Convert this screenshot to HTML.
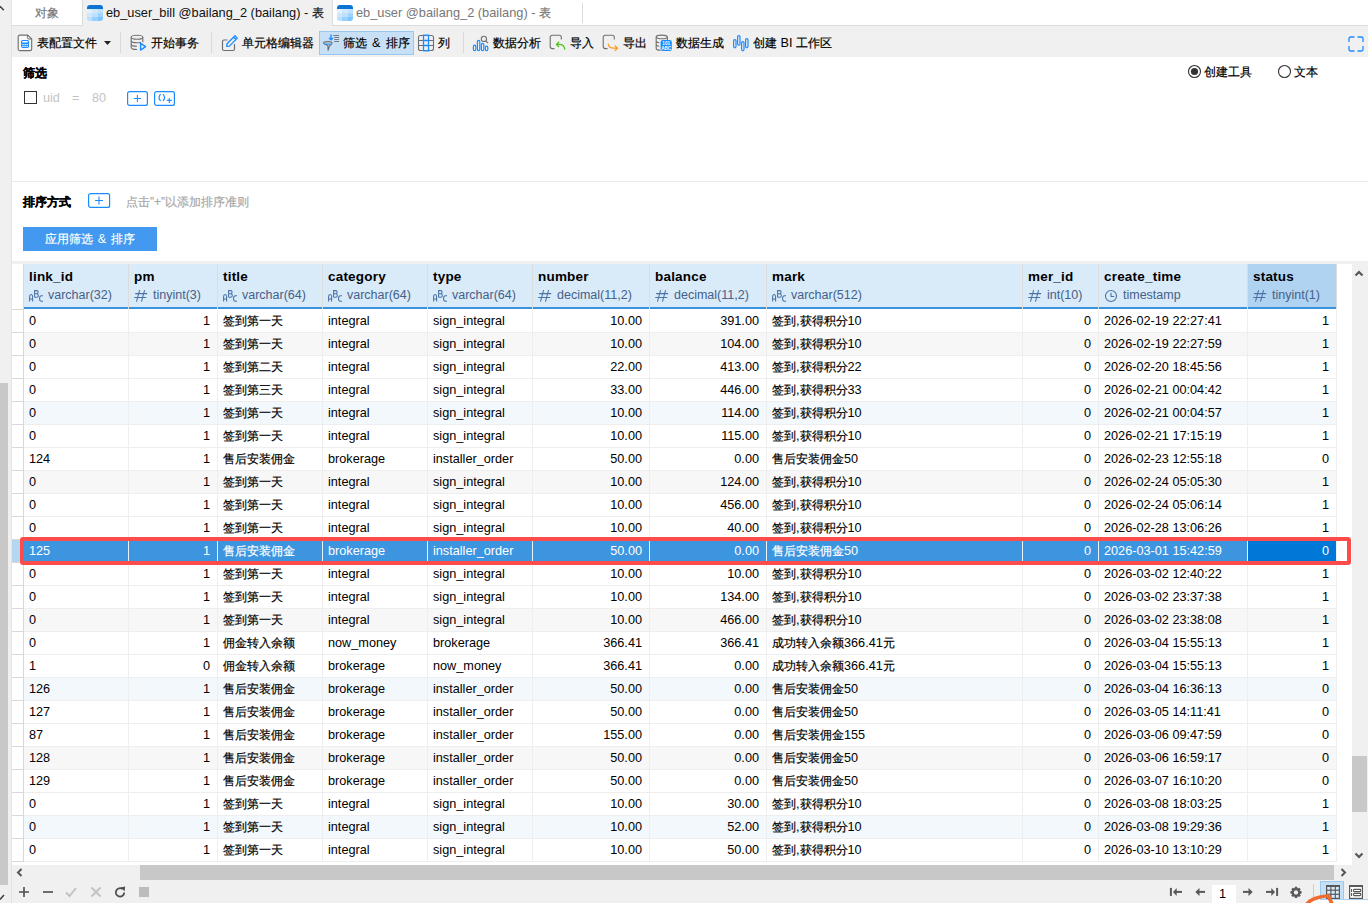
<!DOCTYPE html>
<html><head><meta charset="utf-8"><style>
*{box-sizing:border-box;margin:0;padding:0}
html,body{width:1368px;height:903px;overflow:hidden;background:#fff;font-family:"Liberation Sans",sans-serif;color:#000}
.a{position:absolute}
i{font-style:normal;font-size:12px;-webkit-text-stroke:0.2px}
.tb{font-size:12.7px;white-space:nowrap}
.ico{position:absolute}
.c{position:absolute;top:0;height:23px;line-height:22px;font-size:12.7px;padding:0 7px 0 5px;white-space:nowrap;overflow:hidden;border-right:1px solid #eeeeee;border-bottom:1px solid #eeeeee}
.r{text-align:right}
.row{position:absolute;left:12px;width:1324px;height:23px}
.rh{position:absolute;left:0;top:0;width:12px;height:23px;border-right:1px solid #d9d9d9;border-bottom:1px solid #d9d9d9;background:#fff}
.hd{position:absolute;top:264px;height:45px;background:#d9eaf8;border-right:1px solid #dcdcdc}
.bl{position:absolute;left:0;right:0;bottom:0;height:2px;background:#3b93de}
.hn{position:absolute;left:5px;top:5px;font-weight:bold;font-size:13.5px;line-height:16px;letter-spacing:0.2px}
.ht{position:absolute;left:5px;top:23px;font-size:12.5px;color:#44618a;line-height:16px;white-space:nowrap}
.ht span{margin-left:19px}
</style></head><body>

<div class="a" style="left:0;top:0;width:12px;height:903px;background:#f0f0f0;border-right:1px solid #e3e3e3"></div>
<div class="a" style="left:0;top:383px;width:8px;height:502px;background:#c8c8c8"></div>
<div class="a" style="left:12px;top:0;width:1356px;height:26px;background:#fff;border-bottom:1px solid #dcdcdc"></div>
<div class="a tb" style="left:35px;top:5px;color:#777"><i>对象</i></div>
<div class="a" style="left:82px;top:0;width:251px;height:27px;background:#f0f0f0;border-left:1px solid #dcdcdc;border-right:1px solid #dcdcdc"></div>
<svg class="ico" style="left:87px;top:5px" width="16" height="16" viewBox="0 0 16 16"><defs><clipPath id="tc1"><rect x="0" y="0" width="16" height="16" rx="3"/></clipPath></defs><g clip-path="url(#tc1)"><rect x="0" y="0" width="16" height="4.2" fill="#0a74d4"/><rect x="0" y="4.2" width="5" height="3.9" fill="#e3f1fd"/><rect x="5" y="4.2" width="6" height="3.9" fill="#d0e8fc"/><rect x="11" y="4.2" width="5" height="3.9" fill="#bfe0fc"/><rect x="0" y="8.1" width="5" height="3.9" fill="#cfe7fc"/><rect x="5" y="8.1" width="6" height="3.9" fill="#bde0fc"/><rect x="11" y="8.1" width="5" height="3.9" fill="#9fd2fe"/><rect x="0" y="12" width="5" height="4" fill="#bde0fc"/><rect x="5" y="12" width="6" height="4" fill="#9ad0fe"/><rect x="11" y="12" width="5" height="4" fill="#80c4ff"/></g></svg>
<div class="a tb" style="left:106px;top:5px;font-size:12.8px;color:#111">eb_user_bill @bailang_2 (bailang) - <i>表</i></div>
<svg class="ico" style="left:337px;top:5px" width="16" height="16" viewBox="0 0 16 16"><defs><clipPath id="tc2"><rect x="0" y="0" width="16" height="16" rx="3"/></clipPath></defs><g clip-path="url(#tc2)"><rect x="0" y="0" width="16" height="4.2" fill="#0a74d4"/><rect x="0" y="4.2" width="5" height="3.9" fill="#e3f1fd"/><rect x="5" y="4.2" width="6" height="3.9" fill="#d0e8fc"/><rect x="11" y="4.2" width="5" height="3.9" fill="#bfe0fc"/><rect x="0" y="8.1" width="5" height="3.9" fill="#cfe7fc"/><rect x="5" y="8.1" width="6" height="3.9" fill="#bde0fc"/><rect x="11" y="8.1" width="5" height="3.9" fill="#9fd2fe"/><rect x="0" y="12" width="5" height="4" fill="#bde0fc"/><rect x="5" y="12" width="6" height="4" fill="#9ad0fe"/><rect x="11" y="12" width="5" height="4" fill="#80c4ff"/></g></svg>
<div class="a tb" style="left:356px;top:5px;font-size:12.8px;color:#777">eb_user @bailang_2 (bailang) - <i>表</i></div>
<div class="a" style="left:582px;top:3px;width:1px;height:20px;background:#dcdcdc"></div>
<div class="a" style="left:12px;top:26px;width:1356px;height:31px;background:#f0f0f0"></div>
<svg class="ico" style="left:17px;top:34px" width="17" height="18" viewBox="0 0 17 18"><path d="M2.9 1.1h7.8l4 4v9.8a1.7 1.7 0 0 1-1.7 1.7H2.9a1.7 1.7 0 0 1-1.7-1.7V2.8a1.7 1.7 0 0 1 1.7-1.7z" fill="#f8f8f8" stroke="#6f6f6f" stroke-width="1.1"/><path d="M10.4 1.1v2.4a1.5 1.5 0 0 0 1.5 1.5h2.8" fill="none" stroke="#6f6f6f" stroke-width="1"/><rect x="4.1" y="5.9" width="7.9" height="8" rx="1.6" fill="#1a8cff"/><rect x="5.3" y="7.1" width="5.5" height="1.5" rx="0.5" fill="#fff"/><g fill="#fff"><rect x="5.3" y="10" width="1.3" height="1.1"/><rect x="7.4" y="10" width="1.3" height="1.1"/><rect x="9.5" y="10" width="1.3" height="1.1"/><rect x="5.3" y="11.9" width="1.3" height="1.1"/><rect x="7.4" y="11.9" width="1.3" height="1.1"/><rect x="9.5" y="11.9" width="1.3" height="1.1"/></g></svg>
<div class="a tb" style="left:37px;top:35px"><i>表配置文件</i></div>
<svg class="ico" style="left:104px;top:41px" width="7" height="4"><path d="M0 0h7L3.5 4z" fill="#222"/></svg>
<div class="a" style="left:120px;top:32px;width:1px;height:21px;background:#dadada"></div>
<svg class="ico" style="left:130px;top:34px" width="18" height="18" viewBox="0 0 18 18"><g fill="none" stroke="#6f6f6f" stroke-width="1.1"><ellipse cx="7" cy="3.3" rx="5.8" ry="2"/><path d="M1.2 3.3v10.2c0 1.1 2.6 2 5.8 2"/><path d="M12.8 3.3v5"/><path d="M1.2 6.8c0 1.1 2.6 2 5.8 2c1.6 0 3-.2 4-.6"/><path d="M1.2 10.2c0 1.1 2.6 2 5.8 2"/></g><path d="M10.6 9.3v6.8l5-3.4z" fill="none" stroke="#1a8cff" stroke-width="1.4" stroke-linejoin="round"/></svg>
<div class="a tb" style="left:151px;top:35px"><i>开始事务</i></div>
<div class="a" style="left:211px;top:32px;width:1px;height:21px;background:#dadada"></div>
<svg class="ico" style="left:221px;top:34px" width="18" height="18" viewBox="0 0 18 18"><path d="M6.5 6H3a1.5 1.5 0 0 0-1.5 1.5v7.5A1.5 1.5 0 0 0 3 16.5h9a1.5 1.5 0 0 0 1.5-1.5v-5" fill="none" stroke="#6f6f6f" stroke-width="1.2"/><path d="M5.7 12.4l.3-2.6 8-8 2.3 2.3-8 8z M12.6 3.2l2.3 2.3" fill="none" stroke="#1a8cff" stroke-width="1.3" stroke-linejoin="round"/></svg>
<div class="a tb" style="left:242px;top:35px"><i>单元格编辑器</i></div>
<div class="a" style="left:319px;top:31px;width:95px;height:24px;background:#c7e0f5;border:1px solid #98c8f0"></div>
<svg class="ico" style="left:322px;top:33px" width="19" height="19" viewBox="0 0 19 19"><path d="M1.5 10.2c0-1 2-1.6 4.3-1.6s4.3.6 4.3 1.6c0 .6-1.3 1.3-2.6 2.6l-1.4 4.5-.2-4.5C4.4 11.5 1.5 11 1.5 10.2z" fill="none" stroke="#6f6f6f" stroke-width="1.1" stroke-linejoin="round"/><path d="M2.5 11.1h6" stroke="#1a8cff" stroke-width="1.1"/><path d="M9 1.5v5.3M7 4.9l2 2 2-2" fill="none" stroke="#1a8cff" stroke-width="1.3"/><path d="M11.3 2.5h5.8M12.2 4.5h4.9M12.2 6.5h4.9M12.2 8.5h4.9" stroke="#6f6f6f" stroke-width="0.9"/></svg>
<div class="a tb" style="left:343px;top:35px;word-spacing:1.5px"><i>筛选</i> &amp; <i>排序</i></div>
<svg class="ico" style="left:417px;top:34px" width="18" height="18" viewBox="0 0 18 18"><rect x="1.5" y="1.5" width="15" height="15" rx="2" fill="none" stroke="#6f6f6f" stroke-width="1.1"/><path d="M1.5 6.5h15M1.5 11.5h15" stroke="#6f6f6f" stroke-width="1.1"/><rect x="6.5" y="1.2" width="5" height="15.6" fill="none" stroke="#1a8cff" stroke-width="1.3"/><path d="M6.5 6.5h5M6.5 11.5h5" stroke="#1a8cff" stroke-width="1.3"/></svg>
<div class="a tb" style="left:438px;top:35px"><i>列</i></div>
<div class="a" style="left:463px;top:32px;width:1px;height:21px;background:#dadada"></div>
<svg class="ico" style="left:471px;top:34px" width="19" height="18" viewBox="0 0 19 18"><g fill="none" stroke="#1a8cff" stroke-width="1.2"><rect x="2.4" y="11.2" width="2.4" height="5.4" rx="1.2"/><rect x="6.4" y="6.3" width="2.4" height="10.3" rx="1.2"/><rect x="10.4" y="9.3" width="2.4" height="7.3" rx="1.2"/><rect x="14.4" y="12.2" width="2.4" height="4.4" rx="1.2"/></g><circle cx="12.9" cy="4.9" r="2.6" fill="none" stroke="#6f6f6f" stroke-width="1.1"/><path d="M14.8 6.8l2.3 2.3" stroke="#6f6f6f" stroke-width="1.2"/></svg>
<div class="a tb" style="left:493px;top:35px"><i>数据分析</i></div>
<svg class="ico" style="left:549px;top:34px" width="18" height="18" viewBox="0 0 18 18"><path d="M5.5 14.6H3.2A2 2 0 0 1 1.2 12.6V3.3A2 2 0 0 1 3.2 1.3h7.1A2 2 0 0 1 12.3 3.3v2.2" fill="none" stroke="#6f6f6f" stroke-width="1.1"/><path d="M15.8 15.6c-.3-3.2-2.4-5.2-5.5-5.2H7.6M10.1 7.8L7.4 10.4l2.7 2.6" fill="none" stroke="#4cc21c" stroke-width="1.2"/></svg>
<div class="a tb" style="left:570px;top:35px"><i>导入</i></div>
<svg class="ico" style="left:602px;top:34px" width="18" height="18" viewBox="0 0 18 18"><path d="M5.5 14.6H3.2A2 2 0 0 1 1.2 12.6V3.3A2 2 0 0 1 3.2 1.3h7.1A2 2 0 0 1 12.3 3.3v2.2" fill="none" stroke="#6f6f6f" stroke-width="1.1"/><path d="M6.2 9.6c.4 2.8 2.2 4.6 5 4.6h4.2M12.8 11.5l2.8 2.7-2.8 2.6" fill="none" stroke="#ff9a1a" stroke-width="1.2"/></svg>
<div class="a tb" style="left:623px;top:35px"><i>导出</i></div>
<svg class="ico" style="left:655px;top:34px" width="18" height="18" viewBox="0 0 18 18"><g fill="none" stroke="#6f6f6f" stroke-width="1.1"><ellipse cx="6.8" cy="2.9" rx="5.6" ry="1.8"/><path d="M1.2 2.9v11.5c0 1 2 1.7 4.5 1.8"/><path d="M12.4 2.9v3.3"/><path d="M1.2 6.9c0 .8 1.2 1.4 3 1.7M1.2 10.6c0 .8 1.2 1.4 3 1.7"/></g><rect x="5.6" y="6" width="11.2" height="11" rx="2.2" fill="#1a8cff"/><text x="11.2" y="10.9" font-size="4.6" font-family="Liberation Sans" font-weight="bold" text-anchor="middle" fill="#fff">101</text><text x="11.2" y="15.8" font-size="4.6" font-family="Liberation Sans" font-weight="bold" text-anchor="middle" fill="#fff">ABC</text></svg>
<div class="a tb" style="left:676px;top:35px"><i>数据生成</i></div>
<svg class="ico" style="left:732px;top:34px" width="18" height="18" viewBox="0 0 18 18"><g fill="none" stroke="#1a8cff" stroke-width="1.2"><rect x="1.6" y="5.6" width="2.4" height="8.2" rx="1.2"/><rect x="5.6" y="1.6" width="2.4" height="9.6" rx="1.2"/><rect x="9.6" y="7.6" width="2.4" height="9.2" rx="1.2"/><rect x="13.6" y="4.6" width="2.4" height="9.2" rx="1.2"/></g></svg>
<div class="a tb" style="left:753px;top:35px"><i>创建</i> BI <i>工作区</i></div>
<svg class="ico" style="left:1348px;top:36px" width="16" height="16" viewBox="0 0 16 16"><path d="M1 5.5V2.5A1.5 1.5 0 0 1 2.5 1h3.5M10 1h3.5A1.5 1.5 0 0 1 15 2.5v3M15 10.5v3a1.5 1.5 0 0 1-1.5 1.5H10M6 15H2.5A1.5 1.5 0 0 1 1 13.5v-3" fill="none" stroke="#1a8cff" stroke-width="1.3" stroke-linecap="round"/></svg>
<div class="a" style="left:23px;top:63px;font-weight:bold"><i style="font-size:12px">筛选</i></div>
<div class="a" style="left:24px;top:91px;width:13px;height:13px;border:1.4px solid #333;background:#fff"></div>
<div class="a" style="left:43px;top:91px;font-size:12.7px;color:#c4c4c4;white-space:nowrap">uid</div>
<div class="a" style="left:72px;top:91px;font-size:12.7px;color:#c4c4c4">=</div>
<div class="a" style="left:92px;top:91px;font-size:12.7px;color:#c4c4c4">80</div>
<svg class="ico" style="left:127px;top:91px" width="21" height="15" viewBox="0 0 21 15"><rect x="0.6" y="0.6" width="19.8" height="13.8" rx="2" fill="#fff" stroke="#1a8cff" stroke-width="1.2"/><path d="M10.4 3.9v7M6.9 7.4h7" stroke="#1a8cff" stroke-width="1.05"/></svg>
<svg class="ico" style="left:154px;top:91px" width="21" height="15" viewBox="0 0 21 15"><rect x="0.6" y="0.6" width="19.8" height="13.8" rx="2" fill="#fff" stroke="#1a8cff" stroke-width="1.2"/><path d="M6.6 3.1Q3.4 6.5 6.6 9.9M9 3.1Q12.2 6.5 9 9.9" fill="none" stroke="#1a8cff" stroke-width="1.2"/><path d="M15.3 6.9v5M12.8 9.4h5" stroke="#1a8cff" stroke-width="1.1"/></svg>
<svg class="ico" style="left:1187px;top:64px" width="15" height="15" viewBox="0 0 15 15"><circle cx="7.5" cy="7.5" r="6" fill="#fff" stroke="#333" stroke-width="1.1"/><circle cx="7.5" cy="7.5" r="3.6" fill="#333"/></svg>
<div class="a tb" style="left:1204px;top:64px"><i>创建工具</i></div>
<svg class="ico" style="left:1277px;top:64px" width="15" height="15" viewBox="0 0 15 15"><circle cx="7.5" cy="7.5" r="6" fill="#fff" stroke="#333" stroke-width="1.1"/></svg>
<div class="a tb" style="left:1294px;top:64px"><i>文本</i></div>
<div class="a" style="left:12px;top:181px;width:1356px;height:1px;background:#e9e9e9"></div>
<div class="a" style="left:23px;top:192px;font-weight:bold"><i style="font-size:12px">排序方式</i></div>
<svg class="ico" style="left:88px;top:193px" width="23" height="15" viewBox="0 0 23 15"><rect x="0.6" y="0.6" width="21" height="13.8" rx="2" fill="#fff" stroke="#1a8cff" stroke-width="1.2"/><path d="M11 3.5v8M7 7.5h8" stroke="#1a8cff" stroke-width="1.1"/></svg>
<div class="a tb" style="left:126px;top:194px;color:#a8a8a8"><i>点击”+”以添加排序准则</i></div>
<div class="a" style="left:23px;top:227px;width:134px;height:24px;background:#4299ef"></div>
<div class="a tb" style="left:45px;top:231px;color:#fff;word-spacing:1.2px"><i>应用筛选</i> &amp; <i>排序</i></div>
<div class="a" style="left:12px;top:261px;width:1356px;height:3px;background:#f0f0f0"></div>
<div class="hd" style="left:24px;width:105px;background:#d9eaf8"><div class="hn">link_id</div><svg class="ico" style="left:5px;top:25px" width="16" height="14" viewBox="0 0 16 14"><path d="M0.6 12.4V7.6a1.5 2.1 0 0 1 3 0v4.8M0.6 10h3" fill="none" stroke="#4a72a6" stroke-width="1.05"/><path d="M5.6 8.2V1.6H7.6a1.5 1.6 0 0 1 0 3.2H5.6M7.7 4.8a1.6 1.7 0 0 1 0 3.4H5.6" fill="none" stroke="#4a72a6" stroke-width="1.05"/><path d="M14 6.8H12.5a1.9 2.7 0 0 0 0 5.5H14" fill="none" stroke="#4a72a6" stroke-width="1.05"/></svg><div class="ht"><span>varchar(32)</span></div><div class="bl"></div></div>
<div class="hd" style="left:129px;width:89px;background:#d9eaf8"><div class="hn">pm</div><svg class="ico" style="left:5px;top:25px" width="16" height="14" viewBox="0 0 16 14"><path d="M5.6 1.2L2.5 12.6M10.6 1.2L7.5 12.6M1.2 4.6h12M0.2 8.4h12" stroke="#4a72a6" stroke-width="1.05" fill="none"/></svg><div class="ht"><span>tinyint(3)</span></div><div class="bl"></div></div>
<div class="hd" style="left:218px;width:105px;background:#d9eaf8"><div class="hn">title</div><svg class="ico" style="left:5px;top:25px" width="16" height="14" viewBox="0 0 16 14"><path d="M0.6 12.4V7.6a1.5 2.1 0 0 1 3 0v4.8M0.6 10h3" fill="none" stroke="#4a72a6" stroke-width="1.05"/><path d="M5.6 8.2V1.6H7.6a1.5 1.6 0 0 1 0 3.2H5.6M7.7 4.8a1.6 1.7 0 0 1 0 3.4H5.6" fill="none" stroke="#4a72a6" stroke-width="1.05"/><path d="M14 6.8H12.5a1.9 2.7 0 0 0 0 5.5H14" fill="none" stroke="#4a72a6" stroke-width="1.05"/></svg><div class="ht"><span>varchar(64)</span></div><div class="bl"></div></div>
<div class="hd" style="left:323px;width:105px;background:#d9eaf8"><div class="hn">category</div><svg class="ico" style="left:5px;top:25px" width="16" height="14" viewBox="0 0 16 14"><path d="M0.6 12.4V7.6a1.5 2.1 0 0 1 3 0v4.8M0.6 10h3" fill="none" stroke="#4a72a6" stroke-width="1.05"/><path d="M5.6 8.2V1.6H7.6a1.5 1.6 0 0 1 0 3.2H5.6M7.7 4.8a1.6 1.7 0 0 1 0 3.4H5.6" fill="none" stroke="#4a72a6" stroke-width="1.05"/><path d="M14 6.8H12.5a1.9 2.7 0 0 0 0 5.5H14" fill="none" stroke="#4a72a6" stroke-width="1.05"/></svg><div class="ht"><span>varchar(64)</span></div><div class="bl"></div></div>
<div class="hd" style="left:428px;width:105px;background:#d9eaf8"><div class="hn">type</div><svg class="ico" style="left:5px;top:25px" width="16" height="14" viewBox="0 0 16 14"><path d="M0.6 12.4V7.6a1.5 2.1 0 0 1 3 0v4.8M0.6 10h3" fill="none" stroke="#4a72a6" stroke-width="1.05"/><path d="M5.6 8.2V1.6H7.6a1.5 1.6 0 0 1 0 3.2H5.6M7.7 4.8a1.6 1.7 0 0 1 0 3.4H5.6" fill="none" stroke="#4a72a6" stroke-width="1.05"/><path d="M14 6.8H12.5a1.9 2.7 0 0 0 0 5.5H14" fill="none" stroke="#4a72a6" stroke-width="1.05"/></svg><div class="ht"><span>varchar(64)</span></div><div class="bl"></div></div>
<div class="hd" style="left:533px;width:117px;background:#d9eaf8"><div class="hn">number</div><svg class="ico" style="left:5px;top:25px" width="16" height="14" viewBox="0 0 16 14"><path d="M5.6 1.2L2.5 12.6M10.6 1.2L7.5 12.6M1.2 4.6h12M0.2 8.4h12" stroke="#4a72a6" stroke-width="1.05" fill="none"/></svg><div class="ht"><span>decimal(11,2)</span></div><div class="bl"></div></div>
<div class="hd" style="left:650px;width:117px;background:#d9eaf8"><div class="hn">balance</div><svg class="ico" style="left:5px;top:25px" width="16" height="14" viewBox="0 0 16 14"><path d="M5.6 1.2L2.5 12.6M10.6 1.2L7.5 12.6M1.2 4.6h12M0.2 8.4h12" stroke="#4a72a6" stroke-width="1.05" fill="none"/></svg><div class="ht"><span>decimal(11,2)</span></div><div class="bl"></div></div>
<div class="hd" style="left:767px;width:256px;background:#d9eaf8"><div class="hn">mark</div><svg class="ico" style="left:5px;top:25px" width="16" height="14" viewBox="0 0 16 14"><path d="M0.6 12.4V7.6a1.5 2.1 0 0 1 3 0v4.8M0.6 10h3" fill="none" stroke="#4a72a6" stroke-width="1.05"/><path d="M5.6 8.2V1.6H7.6a1.5 1.6 0 0 1 0 3.2H5.6M7.7 4.8a1.6 1.7 0 0 1 0 3.4H5.6" fill="none" stroke="#4a72a6" stroke-width="1.05"/><path d="M14 6.8H12.5a1.9 2.7 0 0 0 0 5.5H14" fill="none" stroke="#4a72a6" stroke-width="1.05"/></svg><div class="ht"><span>varchar(512)</span></div><div class="bl"></div></div>
<div class="hd" style="left:1023px;width:76px;background:#d9eaf8"><div class="hn">mer_id</div><svg class="ico" style="left:5px;top:25px" width="16" height="14" viewBox="0 0 16 14"><path d="M5.6 1.2L2.5 12.6M10.6 1.2L7.5 12.6M1.2 4.6h12M0.2 8.4h12" stroke="#4a72a6" stroke-width="1.05" fill="none"/></svg><div class="ht"><span>int(10)</span></div><div class="bl"></div></div>
<div class="hd" style="left:1099px;width:149px;background:#d9eaf8"><div class="hn">create_time</div><svg class="ico" style="left:5px;top:25px" width="16" height="14" viewBox="0 0 16 14"><circle cx="7" cy="7" r="5.5" fill="none" stroke="#4a72a6" stroke-width="1.1"/><path d="M7 3.8v3.7h3.2" fill="none" stroke="#4a72a6" stroke-width="1.1"/></svg><div class="ht"><span>timestamp</span></div><div class="bl"></div></div>
<div class="hd" style="left:1248px;width:89px;background:#afd3f0"><div class="hn">status</div><svg class="ico" style="left:5px;top:25px" width="16" height="14" viewBox="0 0 16 14"><path d="M5.6 1.2L2.5 12.6M10.6 1.2L7.5 12.6M1.2 4.6h12M0.2 8.4h12" stroke="#4a72a6" stroke-width="1.05" fill="none"/></svg><div class="ht"><span>tinyint(1)</span></div><div class="bl"></div></div>
<div class="a" style="left:12px;top:264px;width:12px;height:46px;background:#fff;border-right:1px solid #d9d9d9;border-bottom:1px solid #d9d9d9"></div>
<div class="a" style="left:12px;top:310px;width:1324px;height:23px">
<div class="rh" style="background:#fff"></div>
<div class="c" style="left:12px;width:105px;background:#fff">0</div>
<div class="c r" style="left:117px;width:89px;background:#fff">1</div>
<div class="c" style="left:206px;width:105px;background:#fff"><i>签到第一天</i></div>
<div class="c" style="left:311px;width:105px;background:#fff">integral</div>
<div class="c" style="left:416px;width:105px;background:#fff">sign_integral</div>
<div class="c r" style="left:521px;width:117px;background:#fff">10.00</div>
<div class="c r" style="left:638px;width:117px;background:#fff">391.00</div>
<div class="c" style="left:755px;width:256px;background:#fff"><i>签到</i>,<i>获得积分</i>10</div>
<div class="c r" style="left:1011px;width:76px;background:#fff">0</div>
<div class="c" style="left:1087px;width:149px;background:#fff">2026-02-19 22:27:41</div>
<div class="c r" style="left:1236px;width:89px;background:#fff">1</div>
</div>
<div class="a" style="left:12px;top:333px;width:1324px;height:23px">
<div class="rh" style="background:#fff"></div>
<div class="c" style="left:12px;width:105px;background:#f7f7f7">0</div>
<div class="c r" style="left:117px;width:89px;background:#f7f7f7">1</div>
<div class="c" style="left:206px;width:105px;background:#f7f7f7"><i>签到第一天</i></div>
<div class="c" style="left:311px;width:105px;background:#f7f7f7">integral</div>
<div class="c" style="left:416px;width:105px;background:#f7f7f7">sign_integral</div>
<div class="c r" style="left:521px;width:117px;background:#f7f7f7">10.00</div>
<div class="c r" style="left:638px;width:117px;background:#f7f7f7">104.00</div>
<div class="c" style="left:755px;width:256px;background:#f7f7f7"><i>签到</i>,<i>获得积分</i>10</div>
<div class="c r" style="left:1011px;width:76px;background:#f7f7f7">0</div>
<div class="c" style="left:1087px;width:149px;background:#f7f7f7">2026-02-19 22:27:59</div>
<div class="c r" style="left:1236px;width:89px;background:#f7f7f7">1</div>
</div>
<div class="a" style="left:12px;top:356px;width:1324px;height:23px">
<div class="rh" style="background:#fff"></div>
<div class="c" style="left:12px;width:105px;background:#fff">0</div>
<div class="c r" style="left:117px;width:89px;background:#fff">1</div>
<div class="c" style="left:206px;width:105px;background:#fff"><i>签到第二天</i></div>
<div class="c" style="left:311px;width:105px;background:#fff">integral</div>
<div class="c" style="left:416px;width:105px;background:#fff">sign_integral</div>
<div class="c r" style="left:521px;width:117px;background:#fff">22.00</div>
<div class="c r" style="left:638px;width:117px;background:#fff">413.00</div>
<div class="c" style="left:755px;width:256px;background:#fff"><i>签到</i>,<i>获得积分</i>22</div>
<div class="c r" style="left:1011px;width:76px;background:#fff">0</div>
<div class="c" style="left:1087px;width:149px;background:#fff">2026-02-20 18:45:56</div>
<div class="c r" style="left:1236px;width:89px;background:#fff">1</div>
</div>
<div class="a" style="left:12px;top:379px;width:1324px;height:23px">
<div class="rh" style="background:#fff"></div>
<div class="c" style="left:12px;width:105px;background:#fff">0</div>
<div class="c r" style="left:117px;width:89px;background:#fff">1</div>
<div class="c" style="left:206px;width:105px;background:#fff"><i>签到第三天</i></div>
<div class="c" style="left:311px;width:105px;background:#fff">integral</div>
<div class="c" style="left:416px;width:105px;background:#fff">sign_integral</div>
<div class="c r" style="left:521px;width:117px;background:#fff">33.00</div>
<div class="c r" style="left:638px;width:117px;background:#fff">446.00</div>
<div class="c" style="left:755px;width:256px;background:#fff"><i>签到</i>,<i>获得积分</i>33</div>
<div class="c r" style="left:1011px;width:76px;background:#fff">0</div>
<div class="c" style="left:1087px;width:149px;background:#fff">2026-02-21 00:04:42</div>
<div class="c r" style="left:1236px;width:89px;background:#fff">1</div>
</div>
<div class="a" style="left:12px;top:402px;width:1324px;height:23px">
<div class="rh" style="background:#fff"></div>
<div class="c" style="left:12px;width:105px;background:#f3f8fd">0</div>
<div class="c r" style="left:117px;width:89px;background:#f3f8fd">1</div>
<div class="c" style="left:206px;width:105px;background:#f3f8fd"><i>签到第一天</i></div>
<div class="c" style="left:311px;width:105px;background:#f3f8fd">integral</div>
<div class="c" style="left:416px;width:105px;background:#f3f8fd">sign_integral</div>
<div class="c r" style="left:521px;width:117px;background:#f3f8fd">10.00</div>
<div class="c r" style="left:638px;width:117px;background:#f3f8fd">114.00</div>
<div class="c" style="left:755px;width:256px;background:#f3f8fd"><i>签到</i>,<i>获得积分</i>10</div>
<div class="c r" style="left:1011px;width:76px;background:#f3f8fd">0</div>
<div class="c" style="left:1087px;width:149px;background:#f3f8fd">2026-02-21 00:04:57</div>
<div class="c r" style="left:1236px;width:89px;background:#f3f8fd">1</div>
</div>
<div class="a" style="left:12px;top:425px;width:1324px;height:23px">
<div class="rh" style="background:#fff"></div>
<div class="c" style="left:12px;width:105px;background:#fff">0</div>
<div class="c r" style="left:117px;width:89px;background:#fff">1</div>
<div class="c" style="left:206px;width:105px;background:#fff"><i>签到第一天</i></div>
<div class="c" style="left:311px;width:105px;background:#fff">integral</div>
<div class="c" style="left:416px;width:105px;background:#fff">sign_integral</div>
<div class="c r" style="left:521px;width:117px;background:#fff">10.00</div>
<div class="c r" style="left:638px;width:117px;background:#fff">115.00</div>
<div class="c" style="left:755px;width:256px;background:#fff"><i>签到</i>,<i>获得积分</i>10</div>
<div class="c r" style="left:1011px;width:76px;background:#fff">0</div>
<div class="c" style="left:1087px;width:149px;background:#fff">2026-02-21 17:15:19</div>
<div class="c r" style="left:1236px;width:89px;background:#fff">1</div>
</div>
<div class="a" style="left:12px;top:448px;width:1324px;height:23px">
<div class="rh" style="background:#fff"></div>
<div class="c" style="left:12px;width:105px;background:#fff">124</div>
<div class="c r" style="left:117px;width:89px;background:#fff">1</div>
<div class="c" style="left:206px;width:105px;background:#fff"><i>售后安装佣金</i></div>
<div class="c" style="left:311px;width:105px;background:#fff">brokerage</div>
<div class="c" style="left:416px;width:105px;background:#fff">installer_order</div>
<div class="c r" style="left:521px;width:117px;background:#fff">50.00</div>
<div class="c r" style="left:638px;width:117px;background:#fff">0.00</div>
<div class="c" style="left:755px;width:256px;background:#fff"><i>售后安装佣金</i>50</div>
<div class="c r" style="left:1011px;width:76px;background:#fff">0</div>
<div class="c" style="left:1087px;width:149px;background:#fff">2026-02-23 12:55:18</div>
<div class="c r" style="left:1236px;width:89px;background:#fff">0</div>
</div>
<div class="a" style="left:12px;top:471px;width:1324px;height:23px">
<div class="rh" style="background:#fff"></div>
<div class="c" style="left:12px;width:105px;background:#f7f7f7">0</div>
<div class="c r" style="left:117px;width:89px;background:#f7f7f7">1</div>
<div class="c" style="left:206px;width:105px;background:#f7f7f7"><i>签到第一天</i></div>
<div class="c" style="left:311px;width:105px;background:#f7f7f7">integral</div>
<div class="c" style="left:416px;width:105px;background:#f7f7f7">sign_integral</div>
<div class="c r" style="left:521px;width:117px;background:#f7f7f7">10.00</div>
<div class="c r" style="left:638px;width:117px;background:#f7f7f7">124.00</div>
<div class="c" style="left:755px;width:256px;background:#f7f7f7"><i>签到</i>,<i>获得积分</i>10</div>
<div class="c r" style="left:1011px;width:76px;background:#f7f7f7">0</div>
<div class="c" style="left:1087px;width:149px;background:#f7f7f7">2026-02-24 05:05:30</div>
<div class="c r" style="left:1236px;width:89px;background:#f7f7f7">1</div>
</div>
<div class="a" style="left:12px;top:494px;width:1324px;height:23px">
<div class="rh" style="background:#fff"></div>
<div class="c" style="left:12px;width:105px;background:#fff">0</div>
<div class="c r" style="left:117px;width:89px;background:#fff">1</div>
<div class="c" style="left:206px;width:105px;background:#fff"><i>签到第一天</i></div>
<div class="c" style="left:311px;width:105px;background:#fff">integral</div>
<div class="c" style="left:416px;width:105px;background:#fff">sign_integral</div>
<div class="c r" style="left:521px;width:117px;background:#fff">10.00</div>
<div class="c r" style="left:638px;width:117px;background:#fff">456.00</div>
<div class="c" style="left:755px;width:256px;background:#fff"><i>签到</i>,<i>获得积分</i>10</div>
<div class="c r" style="left:1011px;width:76px;background:#fff">0</div>
<div class="c" style="left:1087px;width:149px;background:#fff">2026-02-24 05:06:14</div>
<div class="c r" style="left:1236px;width:89px;background:#fff">1</div>
</div>
<div class="a" style="left:12px;top:517px;width:1324px;height:23px">
<div class="rh" style="background:#fff"></div>
<div class="c" style="left:12px;width:105px;background:#fff">0</div>
<div class="c r" style="left:117px;width:89px;background:#fff">1</div>
<div class="c" style="left:206px;width:105px;background:#fff"><i>签到第一天</i></div>
<div class="c" style="left:311px;width:105px;background:#fff">integral</div>
<div class="c" style="left:416px;width:105px;background:#fff">sign_integral</div>
<div class="c r" style="left:521px;width:117px;background:#fff">10.00</div>
<div class="c r" style="left:638px;width:117px;background:#fff">40.00</div>
<div class="c" style="left:755px;width:256px;background:#fff"><i>签到</i>,<i>获得积分</i>10</div>
<div class="c r" style="left:1011px;width:76px;background:#fff">0</div>
<div class="c" style="left:1087px;width:149px;background:#fff">2026-02-28 13:06:26</div>
<div class="c r" style="left:1236px;width:89px;background:#fff">1</div>
</div>
<div class="a" style="left:12px;top:540px;width:1324px;height:23px">
<div class="rh" style="background:#b3d7f3"></div>
<div class="c" style="left:12px;width:105px;background:#3d95e0;color:#fff;border-right-color:#e8f3fc;border-bottom-color:#3d95e0">125</div>
<div class="c r" style="left:117px;width:89px;background:#3d95e0;color:#fff;border-right-color:#e8f3fc;border-bottom-color:#3d95e0">1</div>
<div class="c" style="left:206px;width:105px;background:#3d95e0;color:#fff;border-right-color:#e8f3fc;border-bottom-color:#3d95e0"><i>售后安装佣金</i></div>
<div class="c" style="left:311px;width:105px;background:#3d95e0;color:#fff;border-right-color:#e8f3fc;border-bottom-color:#3d95e0">brokerage</div>
<div class="c" style="left:416px;width:105px;background:#3d95e0;color:#fff;border-right-color:#e8f3fc;border-bottom-color:#3d95e0">installer_order</div>
<div class="c r" style="left:521px;width:117px;background:#3d95e0;color:#fff;border-right-color:#e8f3fc;border-bottom-color:#3d95e0">50.00</div>
<div class="c r" style="left:638px;width:117px;background:#3d95e0;color:#fff;border-right-color:#e8f3fc;border-bottom-color:#3d95e0">0.00</div>
<div class="c" style="left:755px;width:256px;background:#3d95e0;color:#fff;border-right-color:#e8f3fc;border-bottom-color:#3d95e0"><i>售后安装佣金</i>50</div>
<div class="c r" style="left:1011px;width:76px;background:#3d95e0;color:#fff;border-right-color:#e8f3fc;border-bottom-color:#3d95e0">0</div>
<div class="c" style="left:1087px;width:149px;background:#3d95e0;color:#fff;border-right-color:#e8f3fc;border-bottom-color:#3d95e0">2026-03-01 15:42:59</div>
<div class="c r" style="left:1236px;width:89px;background:#0078d7;color:#fff;border-right-color:#e8f3fc;border-bottom-color:#3d95e0">0</div>
</div>
<div class="a" style="left:12px;top:563px;width:1324px;height:23px">
<div class="rh" style="background:#fff"></div>
<div class="c" style="left:12px;width:105px;background:#fff">0</div>
<div class="c r" style="left:117px;width:89px;background:#fff">1</div>
<div class="c" style="left:206px;width:105px;background:#fff"><i>签到第一天</i></div>
<div class="c" style="left:311px;width:105px;background:#fff">integral</div>
<div class="c" style="left:416px;width:105px;background:#fff">sign_integral</div>
<div class="c r" style="left:521px;width:117px;background:#fff">10.00</div>
<div class="c r" style="left:638px;width:117px;background:#fff">10.00</div>
<div class="c" style="left:755px;width:256px;background:#fff"><i>签到</i>,<i>获得积分</i>10</div>
<div class="c r" style="left:1011px;width:76px;background:#fff">0</div>
<div class="c" style="left:1087px;width:149px;background:#fff">2026-03-02 12:40:22</div>
<div class="c r" style="left:1236px;width:89px;background:#fff">1</div>
</div>
<div class="a" style="left:12px;top:586px;width:1324px;height:23px">
<div class="rh" style="background:#fff"></div>
<div class="c" style="left:12px;width:105px;background:#fff">0</div>
<div class="c r" style="left:117px;width:89px;background:#fff">1</div>
<div class="c" style="left:206px;width:105px;background:#fff"><i>签到第一天</i></div>
<div class="c" style="left:311px;width:105px;background:#fff">integral</div>
<div class="c" style="left:416px;width:105px;background:#fff">sign_integral</div>
<div class="c r" style="left:521px;width:117px;background:#fff">10.00</div>
<div class="c r" style="left:638px;width:117px;background:#fff">134.00</div>
<div class="c" style="left:755px;width:256px;background:#fff"><i>签到</i>,<i>获得积分</i>10</div>
<div class="c r" style="left:1011px;width:76px;background:#fff">0</div>
<div class="c" style="left:1087px;width:149px;background:#fff">2026-03-02 23:37:38</div>
<div class="c r" style="left:1236px;width:89px;background:#fff">1</div>
</div>
<div class="a" style="left:12px;top:609px;width:1324px;height:23px">
<div class="rh" style="background:#fff"></div>
<div class="c" style="left:12px;width:105px;background:#f7f7f7">0</div>
<div class="c r" style="left:117px;width:89px;background:#f7f7f7">1</div>
<div class="c" style="left:206px;width:105px;background:#f7f7f7"><i>签到第一天</i></div>
<div class="c" style="left:311px;width:105px;background:#f7f7f7">integral</div>
<div class="c" style="left:416px;width:105px;background:#f7f7f7">sign_integral</div>
<div class="c r" style="left:521px;width:117px;background:#f7f7f7">10.00</div>
<div class="c r" style="left:638px;width:117px;background:#f7f7f7">466.00</div>
<div class="c" style="left:755px;width:256px;background:#f7f7f7"><i>签到</i>,<i>获得积分</i>10</div>
<div class="c r" style="left:1011px;width:76px;background:#f7f7f7">0</div>
<div class="c" style="left:1087px;width:149px;background:#f7f7f7">2026-03-02 23:38:08</div>
<div class="c r" style="left:1236px;width:89px;background:#f7f7f7">1</div>
</div>
<div class="a" style="left:12px;top:632px;width:1324px;height:23px">
<div class="rh" style="background:#fff"></div>
<div class="c" style="left:12px;width:105px;background:#fff">0</div>
<div class="c r" style="left:117px;width:89px;background:#fff">1</div>
<div class="c" style="left:206px;width:105px;background:#fff"><i>佣金转入余额</i></div>
<div class="c" style="left:311px;width:105px;background:#fff">now_money</div>
<div class="c" style="left:416px;width:105px;background:#fff">brokerage</div>
<div class="c r" style="left:521px;width:117px;background:#fff">366.41</div>
<div class="c r" style="left:638px;width:117px;background:#fff">366.41</div>
<div class="c" style="left:755px;width:256px;background:#fff"><i>成功转入余额</i>366.41<i>元</i></div>
<div class="c r" style="left:1011px;width:76px;background:#fff">0</div>
<div class="c" style="left:1087px;width:149px;background:#fff">2026-03-04 15:55:13</div>
<div class="c r" style="left:1236px;width:89px;background:#fff">1</div>
</div>
<div class="a" style="left:12px;top:655px;width:1324px;height:23px">
<div class="rh" style="background:#fff"></div>
<div class="c" style="left:12px;width:105px;background:#fff">1</div>
<div class="c r" style="left:117px;width:89px;background:#fff">0</div>
<div class="c" style="left:206px;width:105px;background:#fff"><i>佣金转入余额</i></div>
<div class="c" style="left:311px;width:105px;background:#fff">brokerage</div>
<div class="c" style="left:416px;width:105px;background:#fff">now_money</div>
<div class="c r" style="left:521px;width:117px;background:#fff">366.41</div>
<div class="c r" style="left:638px;width:117px;background:#fff">0.00</div>
<div class="c" style="left:755px;width:256px;background:#fff"><i>成功转入余额</i>366.41<i>元</i></div>
<div class="c r" style="left:1011px;width:76px;background:#fff">0</div>
<div class="c" style="left:1087px;width:149px;background:#fff">2026-03-04 15:55:13</div>
<div class="c r" style="left:1236px;width:89px;background:#fff">1</div>
</div>
<div class="a" style="left:12px;top:678px;width:1324px;height:23px">
<div class="rh" style="background:#fff"></div>
<div class="c" style="left:12px;width:105px;background:#f3f8fd">126</div>
<div class="c r" style="left:117px;width:89px;background:#f3f8fd">1</div>
<div class="c" style="left:206px;width:105px;background:#f3f8fd"><i>售后安装佣金</i></div>
<div class="c" style="left:311px;width:105px;background:#f3f8fd">brokerage</div>
<div class="c" style="left:416px;width:105px;background:#f3f8fd">installer_order</div>
<div class="c r" style="left:521px;width:117px;background:#f3f8fd">50.00</div>
<div class="c r" style="left:638px;width:117px;background:#f3f8fd">0.00</div>
<div class="c" style="left:755px;width:256px;background:#f3f8fd"><i>售后安装佣金</i>50</div>
<div class="c r" style="left:1011px;width:76px;background:#f3f8fd">0</div>
<div class="c" style="left:1087px;width:149px;background:#f3f8fd">2026-03-04 16:36:13</div>
<div class="c r" style="left:1236px;width:89px;background:#f3f8fd">0</div>
</div>
<div class="a" style="left:12px;top:701px;width:1324px;height:23px">
<div class="rh" style="background:#fff"></div>
<div class="c" style="left:12px;width:105px;background:#fff">127</div>
<div class="c r" style="left:117px;width:89px;background:#fff">1</div>
<div class="c" style="left:206px;width:105px;background:#fff"><i>售后安装佣金</i></div>
<div class="c" style="left:311px;width:105px;background:#fff">brokerage</div>
<div class="c" style="left:416px;width:105px;background:#fff">installer_order</div>
<div class="c r" style="left:521px;width:117px;background:#fff">50.00</div>
<div class="c r" style="left:638px;width:117px;background:#fff">0.00</div>
<div class="c" style="left:755px;width:256px;background:#fff"><i>售后安装佣金</i>50</div>
<div class="c r" style="left:1011px;width:76px;background:#fff">0</div>
<div class="c" style="left:1087px;width:149px;background:#fff">2026-03-05 14:11:41</div>
<div class="c r" style="left:1236px;width:89px;background:#fff">0</div>
</div>
<div class="a" style="left:12px;top:724px;width:1324px;height:23px">
<div class="rh" style="background:#fff"></div>
<div class="c" style="left:12px;width:105px;background:#fff">87</div>
<div class="c r" style="left:117px;width:89px;background:#fff">1</div>
<div class="c" style="left:206px;width:105px;background:#fff"><i>售后安装佣金</i></div>
<div class="c" style="left:311px;width:105px;background:#fff">brokerage</div>
<div class="c" style="left:416px;width:105px;background:#fff">installer_order</div>
<div class="c r" style="left:521px;width:117px;background:#fff">155.00</div>
<div class="c r" style="left:638px;width:117px;background:#fff">0.00</div>
<div class="c" style="left:755px;width:256px;background:#fff"><i>售后安装佣金</i>155</div>
<div class="c r" style="left:1011px;width:76px;background:#fff">0</div>
<div class="c" style="left:1087px;width:149px;background:#fff">2026-03-06 09:47:59</div>
<div class="c r" style="left:1236px;width:89px;background:#fff">0</div>
</div>
<div class="a" style="left:12px;top:747px;width:1324px;height:23px">
<div class="rh" style="background:#fff"></div>
<div class="c" style="left:12px;width:105px;background:#f7f7f7">128</div>
<div class="c r" style="left:117px;width:89px;background:#f7f7f7">1</div>
<div class="c" style="left:206px;width:105px;background:#f7f7f7"><i>售后安装佣金</i></div>
<div class="c" style="left:311px;width:105px;background:#f7f7f7">brokerage</div>
<div class="c" style="left:416px;width:105px;background:#f7f7f7">installer_order</div>
<div class="c r" style="left:521px;width:117px;background:#f7f7f7">50.00</div>
<div class="c r" style="left:638px;width:117px;background:#f7f7f7">0.00</div>
<div class="c" style="left:755px;width:256px;background:#f7f7f7"><i>售后安装佣金</i>50</div>
<div class="c r" style="left:1011px;width:76px;background:#f7f7f7">0</div>
<div class="c" style="left:1087px;width:149px;background:#f7f7f7">2026-03-06 16:59:17</div>
<div class="c r" style="left:1236px;width:89px;background:#f7f7f7">0</div>
</div>
<div class="a" style="left:12px;top:770px;width:1324px;height:23px">
<div class="rh" style="background:#fff"></div>
<div class="c" style="left:12px;width:105px;background:#fff">129</div>
<div class="c r" style="left:117px;width:89px;background:#fff">1</div>
<div class="c" style="left:206px;width:105px;background:#fff"><i>售后安装佣金</i></div>
<div class="c" style="left:311px;width:105px;background:#fff">brokerage</div>
<div class="c" style="left:416px;width:105px;background:#fff">installer_order</div>
<div class="c r" style="left:521px;width:117px;background:#fff">50.00</div>
<div class="c r" style="left:638px;width:117px;background:#fff">0.00</div>
<div class="c" style="left:755px;width:256px;background:#fff"><i>售后安装佣金</i>50</div>
<div class="c r" style="left:1011px;width:76px;background:#fff">0</div>
<div class="c" style="left:1087px;width:149px;background:#fff">2026-03-07 16:10:20</div>
<div class="c r" style="left:1236px;width:89px;background:#fff">0</div>
</div>
<div class="a" style="left:12px;top:793px;width:1324px;height:23px">
<div class="rh" style="background:#fff"></div>
<div class="c" style="left:12px;width:105px;background:#fff">0</div>
<div class="c r" style="left:117px;width:89px;background:#fff">1</div>
<div class="c" style="left:206px;width:105px;background:#fff"><i>签到第一天</i></div>
<div class="c" style="left:311px;width:105px;background:#fff">integral</div>
<div class="c" style="left:416px;width:105px;background:#fff">sign_integral</div>
<div class="c r" style="left:521px;width:117px;background:#fff">10.00</div>
<div class="c r" style="left:638px;width:117px;background:#fff">30.00</div>
<div class="c" style="left:755px;width:256px;background:#fff"><i>签到</i>,<i>获得积分</i>10</div>
<div class="c r" style="left:1011px;width:76px;background:#fff">0</div>
<div class="c" style="left:1087px;width:149px;background:#fff">2026-03-08 18:03:25</div>
<div class="c r" style="left:1236px;width:89px;background:#fff">1</div>
</div>
<div class="a" style="left:12px;top:816px;width:1324px;height:23px">
<div class="rh" style="background:#fff"></div>
<div class="c" style="left:12px;width:105px;background:#f3f8fd">0</div>
<div class="c r" style="left:117px;width:89px;background:#f3f8fd">1</div>
<div class="c" style="left:206px;width:105px;background:#f3f8fd"><i>签到第一天</i></div>
<div class="c" style="left:311px;width:105px;background:#f3f8fd">integral</div>
<div class="c" style="left:416px;width:105px;background:#f3f8fd">sign_integral</div>
<div class="c r" style="left:521px;width:117px;background:#f3f8fd">10.00</div>
<div class="c r" style="left:638px;width:117px;background:#f3f8fd">52.00</div>
<div class="c" style="left:755px;width:256px;background:#f3f8fd"><i>签到</i>,<i>获得积分</i>10</div>
<div class="c r" style="left:1011px;width:76px;background:#f3f8fd">0</div>
<div class="c" style="left:1087px;width:149px;background:#f3f8fd">2026-03-08 19:29:36</div>
<div class="c r" style="left:1236px;width:89px;background:#f3f8fd">1</div>
</div>
<div class="a" style="left:12px;top:839px;width:1324px;height:23px">
<div class="rh" style="background:#fff"></div>
<div class="c" style="left:12px;width:105px;background:#fff">0</div>
<div class="c r" style="left:117px;width:89px;background:#fff">1</div>
<div class="c" style="left:206px;width:105px;background:#fff"><i>签到第一天</i></div>
<div class="c" style="left:311px;width:105px;background:#fff">integral</div>
<div class="c" style="left:416px;width:105px;background:#fff">sign_integral</div>
<div class="c r" style="left:521px;width:117px;background:#fff">10.00</div>
<div class="c r" style="left:638px;width:117px;background:#fff">50.00</div>
<div class="c" style="left:755px;width:256px;background:#fff"><i>签到</i>,<i>获得积分</i>10</div>
<div class="c r" style="left:1011px;width:76px;background:#fff">0</div>
<div class="c" style="left:1087px;width:149px;background:#fff">2026-03-10 13:10:29</div>
<div class="c r" style="left:1236px;width:89px;background:#fff">1</div>
</div>
<div class="a" style="left:1337px;top:264px;width:15px;height:601px;background:#fff"></div>
<div class="a" style="left:12px;top:862px;width:1340px;height:3px;background:#fff"></div>
<div class="a" style="left:20px;top:537px;width:1331px;height:28px;border:4px solid #fb4b4b;border-radius:3px"></div>
<div class="a" style="left:1337px;top:541px;width:10px;height:20px;background:#fff"></div>
<div class="a" style="left:1352px;top:264px;width:16px;height:601px;background:#f0f0f0"></div>
<svg class="ico" style="left:1354px;top:269px" width="10" height="8" viewBox="0 0 10 8"><path d="M1.5 6.5L5 3l3.5 3.5" fill="none" stroke="#555" stroke-width="2.1"/></svg>
<div class="a" style="left:1352px;top:756px;width:15px;height:56px;background:#c8c8c8"></div>
<svg class="ico" style="left:1354px;top:852px" width="10" height="8" viewBox="0 0 10 8"><path d="M1.5 1.5L5 5l3.5-3.5" fill="none" stroke="#555" stroke-width="2.1"/></svg>
<div class="a" style="left:12px;top:865px;width:1356px;height:15px;background:#f0f0f0"></div>
<svg class="ico" style="left:15px;top:868px" width="10" height="9" viewBox="0 0 10 9"><path d="M6.5 1L3 4.5 6.5 8" fill="none" stroke="#555" stroke-width="2"/></svg>
<div class="a" style="left:140px;top:865px;width:1194px;height:15px;background:#c8c8c8"></div>
<svg class="ico" style="left:1338px;top:868px" width="10" height="9" viewBox="0 0 10 9"><path d="M3.5 1L7 4.5 3.5 8" fill="none" stroke="#555" stroke-width="2"/></svg>
<div class="a" style="left:12px;top:880px;width:1356px;height:23px;background:#f0f0f0"></div>
<svg class="ico" style="left:18px;top:886px" width="12" height="12" viewBox="0 0 12 12"><path d="M6 1v10M1 6h10" stroke="#4d4d4d" stroke-width="1.6"/></svg>
<svg class="ico" style="left:42px;top:886px" width="12" height="12" viewBox="0 0 12 12"><path d="M1 6h10" stroke="#4d4d4d" stroke-width="1.6"/></svg>
<svg class="ico" style="left:65px;top:886px" width="12" height="12" viewBox="0 0 12 12"><path d="M1 6.5l3.5 3.5L11 2" fill="none" stroke="#c2c2c2" stroke-width="1.9"/></svg>
<svg class="ico" style="left:90px;top:886px" width="12" height="12" viewBox="0 0 12 12"><path d="M1.5 1.5l9 9M10.5 1.5l-9 9" stroke="#c2c2c2" stroke-width="1.9"/></svg>
<svg class="ico" style="left:114px;top:886px" width="12" height="12" viewBox="0 0 12 12"><path d="M10.2 6.5A4.2 4.2 0 1 1 8.6 3.1" fill="none" stroke="#4d4d4d" stroke-width="1.8"/><path d="M6.6 1.4L11.2 0.6 10.6 5.2z" fill="#4d4d4d"/></svg>
<div class="a" style="left:139px;top:887px;width:10px;height:10px;background:#bcbcbc"></div>
<svg class="ico" style="left:1168px;top:886px" width="16" height="12" viewBox="0 0 16 12"><rect x="1.9" y="1.9" width="2" height="8" fill="#595959"/><path d="M5 5.9L8.7 2v8z" fill="#595959"/><rect x="8" y="4.9" width="6" height="2" fill="#595959"/></svg>
<svg class="ico" style="left:1194px;top:886px" width="12" height="12" viewBox="0 0 12 12"><path d="M1.3 5.9L5.5 2v8z" fill="#595959"/><rect x="5" y="4.9" width="6" height="2" fill="#595959"/></svg>
<div class="a" style="left:1212px;top:885px;width:24px;height:18px;background:#fff"></div>
<div class="a" style="left:1219px;top:887px;font-size:12.7px">1</div>
<svg class="ico" style="left:1242px;top:886px" width="12" height="12" viewBox="0 0 12 12"><path d="M10.7 5.9L6.5 2v8z" fill="#595959"/><rect x="1" y="4.9" width="6" height="2" fill="#595959"/></svg>
<svg class="ico" style="left:1265px;top:886px" width="16" height="12" viewBox="0 0 16 12"><rect x="11.1" y="1.9" width="2" height="8" fill="#595959"/><path d="M10 5.9L6.3 2v8z" fill="#595959"/><rect x="1" y="4.9" width="6" height="2" fill="#595959"/></svg>
<svg class="ico" style="left:1290px;top:886px" width="12" height="13" viewBox="0 0 12 13"><g transform="translate(6 6.4)" fill="#595959"><rect x="-1.3" y="-5.6" width="2.6" height="3" rx="0.6" transform="rotate(0)"/><rect x="-1.3" y="-5.6" width="2.6" height="3" rx="0.6" transform="rotate(45)"/><rect x="-1.3" y="-5.6" width="2.6" height="3" rx="0.6" transform="rotate(90)"/><rect x="-1.3" y="-5.6" width="2.6" height="3" rx="0.6" transform="rotate(135)"/><rect x="-1.3" y="-5.6" width="2.6" height="3" rx="0.6" transform="rotate(180)"/><rect x="-1.3" y="-5.6" width="2.6" height="3" rx="0.6" transform="rotate(225)"/><rect x="-1.3" y="-5.6" width="2.6" height="3" rx="0.6" transform="rotate(270)"/><rect x="-1.3" y="-5.6" width="2.6" height="3" rx="0.6" transform="rotate(315)"/></g><circle cx="6" cy="6.4" r="3.3" fill="none" stroke="#595959" stroke-width="2.2"/></svg>
<div class="a" style="left:1313px;top:884px;width:1px;height:16px;background:#cfcfcf"></div>
<div class="a" style="left:1320px;top:881px;width:24px;height:19px;background:#c5dff5;border:1px solid #99c9ef;border-bottom:none"></div>
<svg class="ico" style="left:1326px;top:885px" width="14" height="14" viewBox="0 0 14 14"><rect x="1" y="2" width="12" height="11" fill="#d8ecfc"/><g fill="#595959"><rect x="0" y="0" width="14" height="2"/><rect x="0" y="0" width="1.2" height="14"/><rect x="12.8" y="0" width="1.2" height="14"/><rect x="0" y="12.8" width="14" height="1.2"/><rect x="4.3" y="0" width="1.2" height="14"/><rect x="8.7" y="0" width="1.2" height="14"/><rect x="0" y="4.6" width="14" height="1.2"/><rect x="0" y="8.7" width="14" height="1.2"/></g></svg>
<svg class="ico" style="left:1349px;top:885px" width="14" height="14" viewBox="0 0 14 14"><rect x="0" y="0" width="14" height="14" fill="#fff"/><g fill="#595959"><rect x="0" y="0" width="14" height="2"/><rect x="0" y="0" width="1.2" height="14"/><rect x="12.8" y="0" width="1.2" height="14"/><rect x="0" y="12.8" width="14" height="1.2"/><rect x="2" y="4" width="1.1" height="3"/><rect x="2" y="8" width="1.1" height="3"/></g><rect x="4.6" y="4.4" width="7" height="2.2" rx="0.6" fill="none" stroke="#595959" stroke-width="1.1"/><rect x="4.6" y="8.4" width="7" height="2.2" rx="0.6" fill="none" stroke="#595959" stroke-width="1.1"/></svg>
<div class="a" style="left:1306px;top:900px;width:62px;height:3px;background:#fff"></div>
<div class="a" style="left:1320px;top:899px;width:48px;height:1px;background:#a9cff0"></div>
<svg class="ico" style="left:1296px;top:888px" width="72" height="15" viewBox="0 0 72 15"><path d="M10.5 16.5c3-4.5 8-7.5 21.5-8.7l4.2 8.2" fill="none" stroke="#f26a2e" stroke-width="3.6" stroke-linejoin="round"/></svg>
<svg class="ico" style="left:0px;top:4px" width="8" height="10" viewBox="0 0 8 10"><path d="M0 2.2L3.8 6.2" fill="none" stroke="#444" stroke-width="1.6"/></svg>
<svg class="ico" style="left:0px;top:892px" width="8" height="10" viewBox="0 0 8 10"><path d="M0 7.5L4 3" fill="none" stroke="#444" stroke-width="1.6"/></svg>
</body></html>
